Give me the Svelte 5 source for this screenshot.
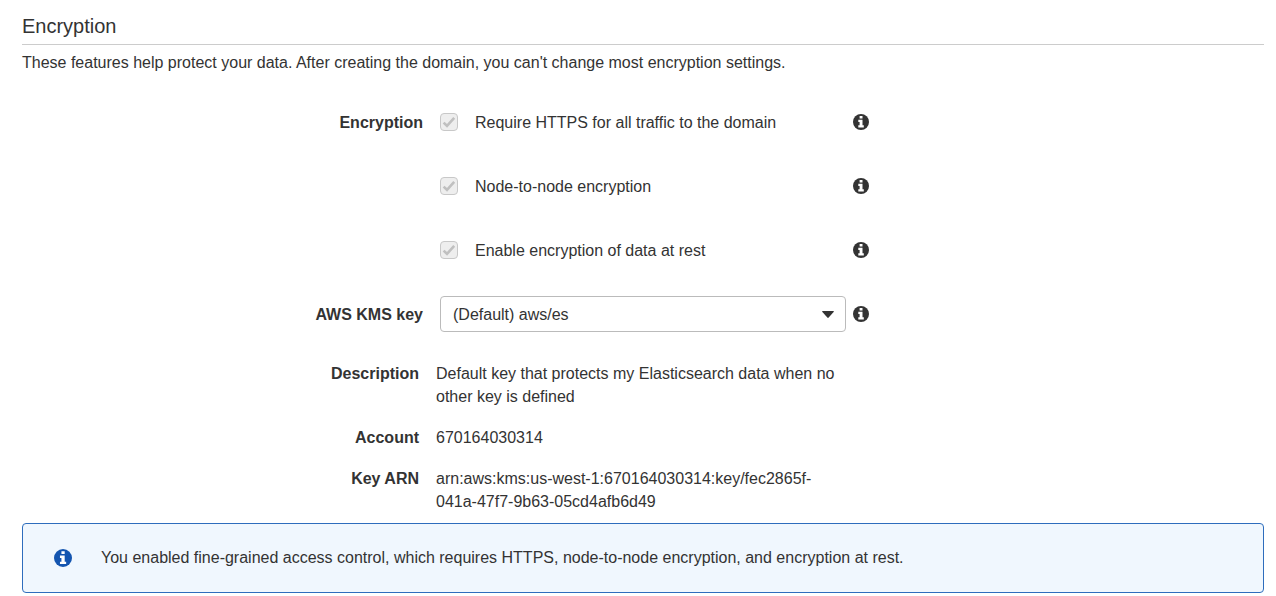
<script>
  let checks = [
    { id: "https", label: "Require HTTPS for all traffic to the domain" },
    { id: "node", label: "Node-to-node encryption" },
    { id: "rest", label: "Enable encryption of data at rest" },
  ];

  let details = [
    { name: "Description", value: "Default key that protects my Elasticsearch data when no other key is defined" },
    { name: "Account", value: "670164030314" },
    { name: "Key ARN", value: "arn:aws:kms:us-west-1:670164030314:key/fec2865f-041a-47f7-9b63-05cd4afb6d49" },
  ];

  let kmsKey = "aws/es";
</script>

{#snippet info()}
  <svg viewBox="0 0 16 16" aria-hidden="true">
    <circle cx="8" cy="8" r="8" fill="currentColor" />
    <path d="M6.6 2h2.9v2.5H6.6zM5.3 5.8h4.2v5.5h1.3v2.1H5.3v-2.1h1.3V7.9H5.3z" fill="#fff" />
  </svg>
{/snippet}

<section class="encryption">
  <h2>Encryption</h2>
  <p class="intro">These features help protect your data. After creating the domain, you can't change most encryption settings.</p>

  <div class="form">
    {#each checks as check, i}
      <div class="row">
        <span class="name">{i === 0 ? "Encryption" : ""}</span>
        <div class="field check">
          <input type="checkbox" id={check.id} checked disabled />
          <label for={check.id}>{check.label}</label>
        </div>
        <button class="info" aria-label="Info">{@render info()}</button>
      </div>
    {/each}

    <div class="row">
      <label class="name" for="kms">AWS KMS key</label>
      <div class="field">
        <select id="kms" bind:value={kmsKey}>
          <option value="aws/es">(Default) aws/es</option>
        </select>
      </div>
      <button class="info" aria-label="Info">{@render info()}</button>
    </div>
  </div>

  <dl>
    {#each details as item}
      <dt>{item.name}</dt>
      <dd>{item.value}</dd>
    {/each}
  </dl>

  <div class="alert">
    {@render info()}
    <p>You enabled fine-grained access control, which requires HTTPS, node-to-node encryption, and encryption at rest.</p>
  </div>
</section>

<style>
  :global(body) {
    margin: 0;
    background: #fff;
  }
  .encryption {
    padding: 14px 12px 3px 22px;
    font-family: "Liberation Sans", Arial, sans-serif;
    font-size: 16px;
    line-height: 24px;
    color: #333;
  }
  h2 {
    margin: 0;
    padding-bottom: 6px;
    border-bottom: 1px solid #ccc;
    font-size: 20px;
    font-weight: normal;
  }
  .intro {
    margin: 6px 0 0;
  }
  .form {
    padding-top: 15px;
  }
  .row {
    display: flex;
    align-items: center;
    min-height: 64px;
  }
  .name,
  .check label {
    padding-top: 2px;
  }
  .name {
    width: 401px;
    margin-right: 17px;
    text-align: right;
    font-weight: bold;
  }
  .field {
    width: 406px;
  }
  .check {
    display: flex;
    align-items: center;
    gap: 17px;
  }
  input {
    appearance: none;
    box-sizing: border-box;
    width: 18px;
    height: 18px;
    margin: 0;
    border: 1px solid #c8c8c8;
    border-radius: 4px;
    background: #eee url("data:image/svg+xml,%3Csvg xmlns='http://www.w3.org/2000/svg' viewBox='0 0 16 16'%3E%3Cpath d='M2.6 8.6l3.4 3.2L13.2 3.8' fill='none' stroke='%23c0c0c0' stroke-width='2.6'/%3E%3C/svg%3E");
  }
  select {
    display: block;
    appearance: none;
    box-sizing: border-box;
    width: 100%;
    height: 36px;
    padding: 1px 12px 0;
    border: 1px solid #bbb;
    border-radius: 4px;
    background: #fff url("data:image/svg+xml,%3Csvg xmlns='http://www.w3.org/2000/svg' viewBox='0 0 12 7'%3E%3Cpath d='M0.6 0h10.8q0.8 0.4 0.2 1.1L6.7 6.6q-0.7 0.7-1.4 0L0.4 1.1Q-0.2 0.4 0.6 0z' fill='%23333'/%3E%3C/svg%3E") no-repeat right 11px center / 12px 7px;
    color: #333;
    font: inherit;
  }
  .info {
    display: flex;
    margin: 0 0 0 7px;
    padding: 0;
    border: 0;
    background: none;
    color: #333;
  }
  .info svg {
    width: 16px;
    height: 16px;
  }
  dl {
    display: grid;
    grid-template-columns: 397px 400px;
    gap: 18px 17px;
    margin: 16px 0 10px;
    line-height: 23px;
  }
  dt {
    text-align: right;
    font-weight: bold;
  }
  dd {
    margin: 0;
  }
  .alert {
    display: flex;
    align-items: center;
    gap: 29px;
    padding: 22px 31px;
    border: 1px solid #2e6dbd;
    border-radius: 4px;
    background: #f0f7fe;
  }
  .alert svg {
    width: 18px;
    height: 18px;
    color: #1455b0;
  }
  .alert p {
    margin: 0;
  }
</style>
